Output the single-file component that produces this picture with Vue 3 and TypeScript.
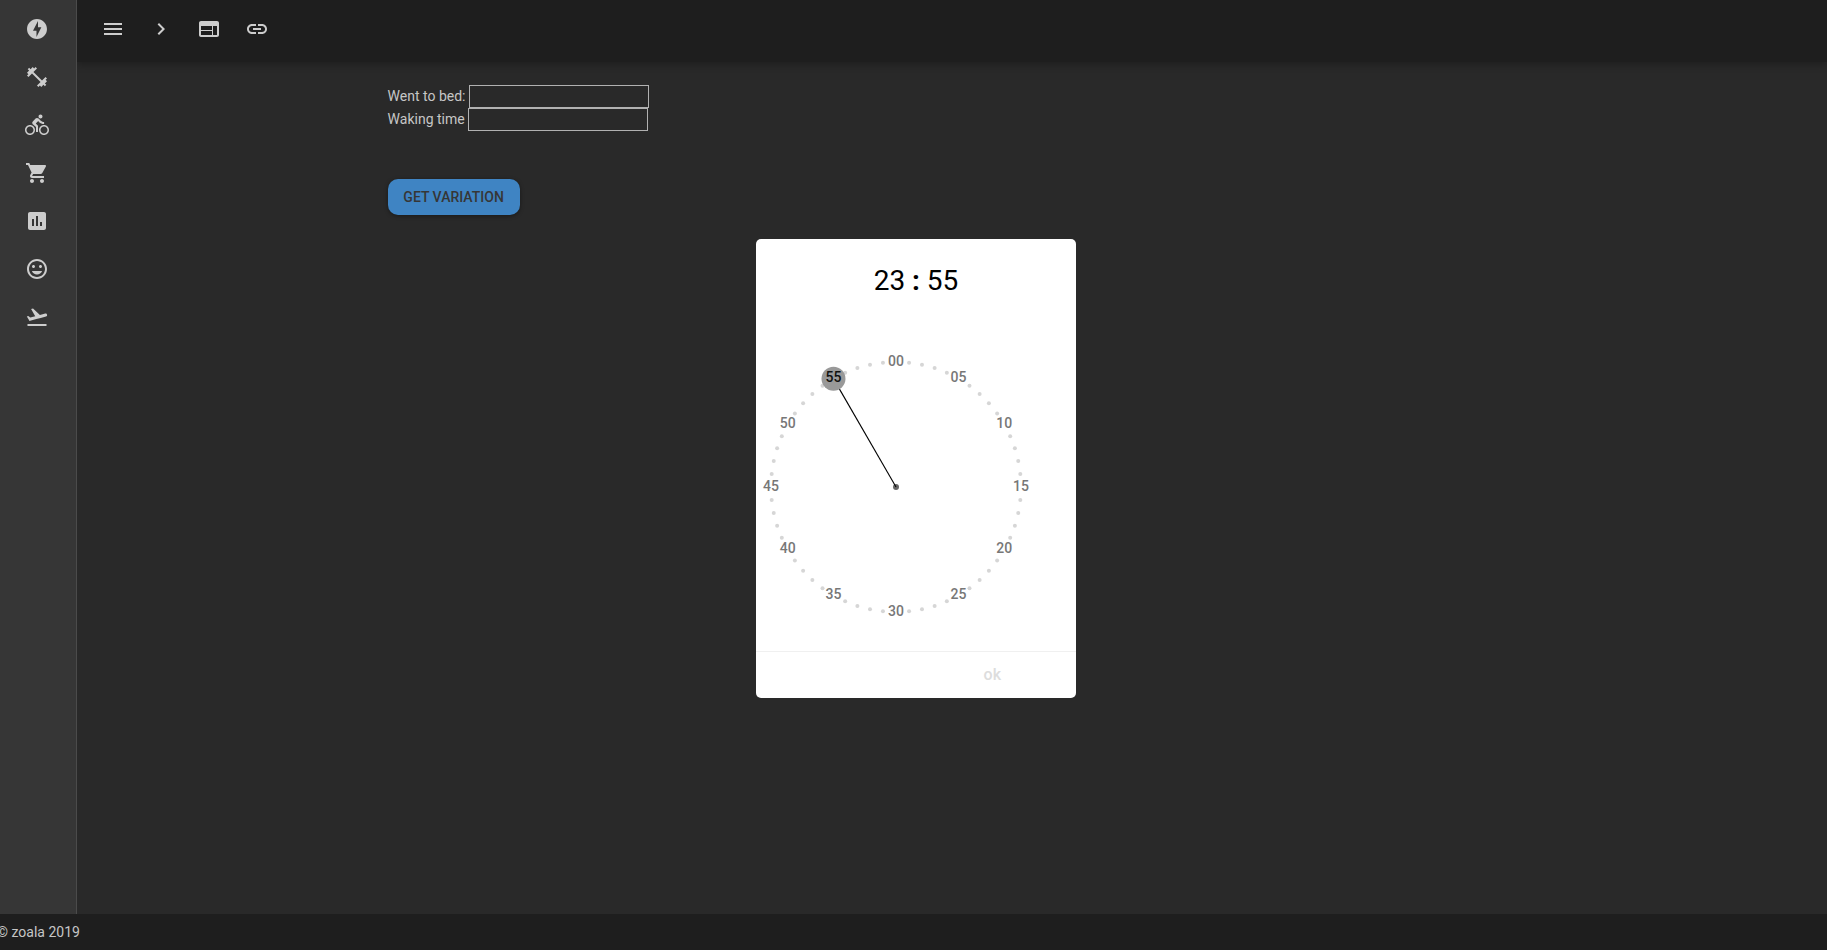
<script setup lang="ts">
interface Icon {
  name: string
  path: string
}

const sideIcons: Icon[] = [
  { name: 'offline_bolt', path: 'M12 2.02c-5.51 0-9.98 4.47-9.98 9.98s4.47 9.98 9.98 9.98 9.98-4.47 9.98-9.98S17.51 2.02 12 2.02zM11.48 20v-6.26H8L13 4v6.26h3.35L11.48 20z' },
  { name: 'fitness_center', path: 'M20.57 14.86L22 13.43 20.57 12 17 15.57 8.43 7 12 3.43 10.57 2 9.14 3.43 7.71 2 5.57 4.14 4.14 2.71 2.71 4.14l1.43 1.43L2 7.71l1.43 1.43L2 10.57 3.43 12 7 8.43 15.57 17 12 20.57 13.43 22l1.43-1.43L16.29 22l2.14-2.14 1.43 1.43 1.43-1.43-1.43-1.43L22 16.29z' },
  { name: 'directions_bike', path: 'M15.5 5.5c1.1 0 2-.9 2-2s-.9-2-2-2-2 .9-2 2 .9 2 2 2zM5 12c-2.8 0-5 2.2-5 5s2.2 5 5 5 5-2.2 5-5-2.2-5-5-5zm0 8.5c-1.9 0-3.5-1.6-3.5-3.5s1.6-3.5 3.5-3.5 3.5 1.6 3.5 3.5-1.6 3.5-3.5 3.5zm5.8-10l2.4-2.4.8.8c1.3 1.3 3 2.1 5.1 2.1V9c-1.5 0-2.7-.6-3.6-1.5l-1.9-1.9c-.5-.4-1-.6-1.6-.6s-1.1.2-1.4.6L7.8 8.4c-.4.4-.6.9-.6 1.4 0 .6.2 1.1.6 1.4L11 14v5h2v-6.2l-2.2-2.3zM19 12c-2.8 0-5 2.2-5 5s2.2 5 5 5 5-2.2 5-5-2.2-5-5-5zm0 8.5c-1.9 0-3.5-1.6-3.5-3.5s1.6-3.5 3.5-3.5 3.5 1.6 3.5 3.5-1.6 3.5-3.5 3.5z' },
  { name: 'shopping_cart', path: 'M7 18c-1.1 0-1.99.9-1.99 2S5.9 22 7 22s2-.9 2-2-.9-2-2-2zM1 2v2h2l3.6 7.59-1.35 2.45c-.16.28-.25.61-.25.96 0 1.1.9 2 2 2h12v-2H7.42c-.14 0-.25-.11-.25-.25l.03-.12.9-1.63h7.45c.75 0 1.41-.41 1.75-1.03l3.58-6.49c.08-.14.12-.31.12-.48 0-.55-.45-1-1-1H5.21l-.94-2H1zm16 16c-1.1 0-1.99.9-1.99 2s.89 2 1.99 2 2-.9 2-2-.9-2-2-2z' },
  { name: 'assessment', path: 'M19 3H5c-1.1 0-2 .9-2 2v14c0 1.1.9 2 2 2h14c1.1 0 2-.9 2-2V5c0-1.1-.9-2-2-2zM9 17H7v-7h2v7zm4 0h-2V7h2v10zm4 0h-2v-4h2v4z' },
  { name: 'insert_emoticon', path: 'M11.99 2C6.47 2 2 6.48 2 12s4.47 10 9.99 10C17.52 22 22 17.52 22 12S17.52 2 11.99 2zM12 20c-4.42 0-8-3.58-8-8s3.58-8 8-8 8 3.58 8 8-3.58 8-8 8zm3.5-9c.83 0 1.5-.67 1.5-1.5S16.33 8 15.5 8 14 8.67 14 9.5s.67 1.5 1.5 1.5zm-7 0c.83 0 1.5-.67 1.5-1.5S9.33 8 8.5 8 7 8.67 7 9.5 7.67 11 8.5 11zm3.5 6.5c2.33 0 4.31-1.46 5.11-3.5H6.89c.8 2.04 2.78 3.5 5.11 3.5z' },
  { name: 'flight_takeoff', path: 'M2.5 19h19v2h-19zm19.57-9.36c-.21-.8-1.04-1.28-1.84-1.06L14.92 10l-6.9-6.43-1.93.51 4.14 7.17-4.97 1.33-1.97-1.54-1.45.39 1.82 3.16.77 1.33 1.6-.43 5.31-1.42 4.35-1.16L21 11.49c.81-.23 1.28-1.05 1.07-1.85z' },
]

const topIcons: Icon[] = [
  { name: 'menu', path: 'M3 18h18v-2H3v2zm0-5h18v-2H3v2zm0-7v2h18V6H3z' },
  { name: 'chevron_right', path: 'M10 6L8.59 7.41 13.17 12l-4.58 4.59L10 18l6-6z' },
  { name: 'web', path: 'M20 4H4c-1.1 0-1.99.9-1.99 2L2 18c0 1.1.9 2 2 2h16c1.1 0 2-.9 2-2V6c0-1.1-.9-2-2-2zm-5 14H4v-4h11v4zm0-5H4V9h11v4zm5 5h-4V9h4v9z' },
  { name: 'link', path: 'M3.9 12c0-1.71 1.39-3.1 3.1-3.1h4V7H7c-2.76 0-5 2.24-5 5s2.24 5 5 5h4v-1.9H7c-1.71 0-3.1-1.39-3.1-3.1zM8 13h8v-2H8v2zm9-6h-4v1.9h4c1.71 0 3.1 1.39 3.1 3.1s-1.39 3.1-3.1 3.1h-4V17h4c2.76 0 5-2.24 5-5s-2.24-5-5-5z' },
]

const selected = 55
const radius = 125

function point(minute: number) {
  const a = (minute * Math.PI) / 30
  return { x: radius * Math.sin(a), y: -radius * Math.cos(a) }
}

const minutes = Array.from({ length: 60 }, (_, i) => ({ value: i, ...point(i) }))
const dots = minutes.filter((m) => m.value % 5 !== 0)
const labels = minutes
  .filter((m) => m.value % 5 === 0)
  .map((m) => ({ ...m, text: String(m.value).padStart(2, '0') }))
const hand = point(selected)
</script>

<template>
  <div class="app">
    <div class="body">
      <nav class="sidebar">
        <svg v-for="icon in sideIcons" :key="icon.name" class="icon" viewBox="0 0 24 24"><path :d="icon.path" /></svg>
      </nav>
      <div class="content">
        <header class="topbar">
          <svg v-for="icon in topIcons" :key="icon.name" class="icon" viewBox="0 0 24 24"><path :d="icon.path" /></svg>
        </header>
        <main class="form">
          <label class="field"><span>Went to bed:</span><input type="text" /></label>
          <label class="field"><span>Waking time</span><input type="text" /></label>
          <button class="action" type="button">GET VARIATION</button>
        </main>
      </div>
    </div>
    <footer class="footer">© zoala 2019</footer>

    <div class="overlay">
      <section class="picker">
        <div class="time"><span>23</span><span class="colon">:</span><span>55</span></div>
        <svg class="clock" viewBox="-140 -140 280 280">
          <circle v-for="d in dots" :key="d.value" class="dot" :cx="d.x" :cy="d.y" r="2" />
          <circle class="knob" :cx="hand.x" :cy="hand.y" r="12" />
          <circle class="pivot" cx="0" cy="0" r="3" />
          <line class="hand" x1="0" y1="0" :x2="hand.x * 0.904" :y2="hand.y * 0.904" />
          <text
            v-for="l in labels"
            :key="l.value"
            class="label"
            :class="{ active: l.value === selected }"
            :x="l.x"
            :y="Math.floor(l.y + 4.01)"
          >{{ l.text }}</text>
        </svg>
        <div class="actions"><button class="ok" type="button">ok</button></div>
      </section>
    </div>
  </div>
</template>

<style>
body {
  margin: 0;
  background: #292929;
  overflow: hidden;
}
</style>

<style scoped>
.app {
  position: relative;
  height: 100vh;
  display: flex;
  flex-direction: column;
  font: 14px Roboto, sans-serif;
  color: #c6c6c6;
  background: #292929;
}
.body {
  flex: 1;
  display: flex;
  min-height: 0;
}
.sidebar {
  position: relative;
  z-index: 1;
  box-sizing: border-box;
  width: 77px;
  padding: 17px 0 0 25px;
  display: flex;
  flex-direction: column;
  gap: 24px;
  background: #363636;
  border-right: 1px solid #4b4b4b;
}
.icon {
  display: block;
  width: 24px;
  height: 24px;
  flex: none;
  fill: #cdcdcd;
}
.content {
  flex: 1;
}
.topbar {
  box-sizing: border-box;
  height: 62px;
  padding: 17px 24px;
  display: flex;
  gap: 24px;
  background: #1e1e1e;
  box-shadow: 0 2px 8px rgba(0, 0, 0, 0.3);
}
.form {
  padding: 23px 0 0 310.6px;
}
.field {
  display: flex;
  align-items: center;
  gap: 3.4px;
  height: 23px;
}
.field span {
  line-height: 16px;
  padding-bottom: 2px;
}
.field input {
  box-sizing: border-box;
  width: 180px;
  height: 23px;
  padding: 0;
  border: 1px solid #b1b1b1;
  background: transparent;
  color: inherit;
}
.action {
  display: block;
  width: 132px;
  height: 36px;
  margin-top: 48px;
  padding: 0;
  border: 0;
  border-radius: 10px;
  background: #3f84c3;
  color: #363636;
  font: 500 14px Roboto, sans-serif;
  box-shadow: 0 1px 4px rgba(0, 0, 0, 0.4);
}
.footer {
  height: 36px;
  line-height: 36px;
  text-indent: -3px;
  background: #1e1e1e;
}
.overlay {
  position: absolute;
  inset: 0;
  z-index: 2;
  display: flex;
  align-items: flex-start;
  padding: 239px 0 0 756px;
  pointer-events: none;
}
.picker {
  width: 320px;
  height: 459px;
  display: flex;
  flex-direction: column;
  border-radius: 5px;
  background: #fff;
  color: #000;
  pointer-events: auto;
}
.time {
  height: 108px;
  display: flex;
  justify-content: center;
  line-height: 83px;
  font-size: 28px;
}
.colon {
  width: 21.4px;
  text-align: center;
  font-weight: 700;
}
.clock {
  display: block;
  width: 280px;
  height: 280px;
  overflow: visible;
}
.dot {
  fill: #d6d6d6;
}
.knob {
  fill: #999;
}
.pivot {
  fill: #666;
}
.hand {
  stroke: #000;
  stroke-width: 1.1;
}
.label {
  fill: #777;
  font-size: 14px;
  font-weight: 500;
  text-anchor: middle;
}
.label.active {
  fill: #111;
}
.actions {
  box-sizing: border-box;
  flex: none;
  height: 47px;
  margin-top: auto;
  padding: 0 75px 2px 0;
  display: flex;
  justify-content: flex-end;
  align-items: center;
  border-top: 1px solid #f0f0f0;
}
.ok {
  padding: 0;
  border: 0;
  background: none;
  color: #ddd;
  font: 500 16px Roboto, sans-serif;
}
</style>
